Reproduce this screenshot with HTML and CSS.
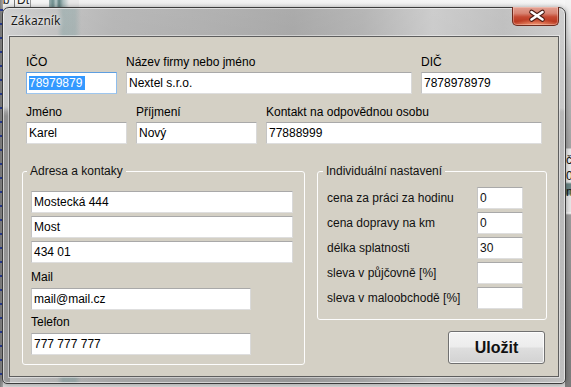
FILE: index.html
```html
<!DOCTYPE html>
<html lang="cs">
<head>
<meta charset="utf-8">
<title>Zákazník</title>
<link rel="stylesheet" href="styles.css">
</head>
<body>
<div class="bg-top"><span class="bg-t1">ab</span><span class="bg-t2">Dt</span><span class="bg-t3"></span></div>
<div class="bg-left"></div>
<div class="bg-right"><span>č</span><span>0</span><span>n</span></div>

<div class="window">
  <div class="titlebar">
    <span class="title">Zákazník</span>
    <div class="close">
      <svg width="47" height="19" viewBox="0 0 47 19">
        <path d="M19.5 6 L30.5 13.5 M30.5 6 L19.5 13.5" stroke="#4a1c14" stroke-width="4.6" stroke-linecap="round" fill="none"/>
        <path d="M19.5 6 L30.5 13.5 M30.5 6 L19.5 13.5" stroke="#ffffff" stroke-width="2.6" stroke-linecap="round" fill="none"/>
      </svg>
    </div>
  </div>
  <div class="client">
    <div class="top">
      <div class="row">
        <div class="field w-ico"><div class="lbl">IČO</div><div class="tb focus"><span class="sel">78979879</span></div></div>
        <div class="field w-name"><div class="lbl">Název firmy nebo jméno</div><div class="tb">Nextel s.r.o.</div></div>
        <div class="field w-dic"><div class="lbl">DIČ</div><div class="tb">7878978979</div></div>
      </div>
      <div class="row row2">
        <div class="field w-jm"><div class="lbl">Jméno</div><div class="tb">Karel</div></div>
        <div class="field w-pr"><div class="lbl">Příjmení</div><div class="tb">Nový</div></div>
        <div class="field w-ko"><div class="lbl">Kontakt na odpovědnou osobu</div><div class="tb">77888999</div></div>
      </div>
    </div>
    <div class="groups">
      <fieldset class="gb gb-addr">
        <legend>Adresa a kontaky</legend>
        <div class="tb addr">Mostecká 444</div>
        <div class="tb addr">Most</div>
        <div class="tb addr">434 01</div>
        <div class="lbl lbl-mail">Mail</div>
        <div class="tb contact">mail@mail.cz</div>
        <div class="lbl lbl-tel">Telefon</div>
        <div class="tb contact">777 777 777</div>
      </fieldset>
      <div class="rcol">
        <fieldset class="gb gb-ind">
          <legend>Individuální nastavení</legend>
          <div class="opt"><span>cena za práci za hodinu</span><div class="tb sm">0</div></div>
          <div class="opt"><span>cena dopravy na km</span><div class="tb sm">0</div></div>
          <div class="opt"><span>délka splatnosti</span><div class="tb sm">30</div></div>
          <div class="opt"><span>sleva v půjčovně [%]</span><div class="tb sm"></div></div>
          <div class="opt"><span>sleva v maloobchodě [%]</span><div class="tb sm"></div></div>
        </fieldset>
        <button class="save">Uložit</button>
      </div>
    </div>
  </div>
</div>
</body>
</html>
```

FILE: styles.css
```css
* { box-sizing: border-box; }

body {
  margin: 0;
  width: 571px;
  height: 387px;
  overflow: hidden;
  position: relative;
  background: #d8d8d8;
  font-family: "Liberation Sans", Arial, sans-serif;
  font-size: 12px;
  color: #000;
}

/* ---- desktop behind the dialog ---- */
.bg-top {
  position: absolute;
  left: 0;
  top: 0;
  width: 571px;
  height: 12px;
  background: linear-gradient(90deg, #f4f4f4 0, #f4f4f4 52px, #dcdcdc 53px, #f0f0f0 60px, #f6f6f6 100%);
  display: flex;
  overflow: hidden;
}
.bg-t1, .bg-t2 {
  font: 12px/12px "Liberation Sans", sans-serif;
  margin-top: -6px;
  color: #222;
}
.bg-t1 { width: 19px; border-right: 1px solid #777; margin-left: -4px; }
.bg-t2 { width: 16px; padding-left: 2px; border-right: 1px solid #999; }
.bg-t3 {
  width: 30px;
  margin-left: 18px;
  background: linear-gradient(90deg, #9fb3b3 0, #6f8f8f 4px, #b9caca 7px, #5f8080 10px, #a9bcbc 14px, #e8e8e8 20px);
}

.bg-left {
  position: absolute;
  left: 0;
  top: 0;
  width: 3px;
  height: 387px;
  background:
    repeating-linear-gradient(180deg, transparent 0 9px, #2b3f9a 9px 11px, transparent 11px 14px),
    linear-gradient(90deg, #7d7d7d, #a8a8a8);
}

.bg-right {
  position: absolute;
  right: 0;
  top: 0;
  width: 6px;
  height: 387px;
  display: flex;
  flex-direction: column;
  padding-top: 152px;
  font: 12px/16px "Liberation Sans", sans-serif;
  color: #111;
  overflow: hidden;
  background: linear-gradient(180deg, #f4f4f4 0, #e2e2e2 30px, #bdbdbd 70px, #a3a3a3 148px,
    #e9e9e9 149px, #e9e9e9 182px, #6a8585 184px, #6a8585 194px, #e6e6e6 196px, #e6e6e6 212px,
    #ffffff 213px, #9c9c9c 215px, #8a8a8a 300px, #7c7c7c 387px);
}
.bg-right span { padding-left: 1px; }

/* ---- dialog window ---- */
.window {
  position: absolute;
  left: 2px;
  top: 7px;
  width: 564px;
  height: 377px;
  border: 1px solid #3c3c3c;
  border-radius: 7px 7px 5px 5px;
  box-shadow: inset 0 0 0 1px rgba(255,255,255,0.55), 0 0 5px rgba(0,0,0,0.35);
  background:
    linear-gradient(180deg, transparent 0, transparent 98px, rgba(50,50,50,0.32) 108px, rgba(50,50,50,0.28) 100%) left top / 7px 100% no-repeat,
    linear-gradient(180deg, rgba(255,255,255,0.18) 0, rgba(255,255,255,0.08) 100px, rgba(0,0,0,0.06) 104px, rgba(0,0,0,0.02) 377px),
    linear-gradient(90deg, transparent 54px, rgba(90,135,135,0.35) 60px, rgba(90,135,135,0.3) 72px, transparent 78px),
    linear-gradient(90deg, #c6c6c6 0, #bababa 40px, #a9a9a9 110px, #a2a2a2 200px, #999999 290px, #a6a6a6 360px, #c2c2c2 430px, #b4b4b4 500px, #c4c4c4 564px);
  display: flex;
  flex-direction: column;
}

.titlebar {
  height: 28px;
  display: flex;
  align-items: flex-start;
  justify-content: space-between;
}
.title {
  font: 12px/16px "Noto Sans", "Open Sans", sans-serif;
  color: #1a1a1a;
  padding: 5px 0 0 8px;
  text-shadow: 0 0 6px rgba(255,255,255,0.9), 0 0 2px rgba(255,255,255,0.8);
}
.close {
  width: 47px;
  height: 19px;
  margin: -1px 6px 0 0;
  border: 1px solid #6e2a1d;
  border-top: none;
  border-radius: 0 0 5px 5px;
  background:
    radial-gradient(ellipse 22px 6px at 50% 100%, rgba(255,170,130,0.8), transparent),
    linear-gradient(180deg, #e3a193 0, #d88472 35%, #c54a33 55%, #bb3a22 80%, #c9553b 100%);
  box-shadow: inset 0 0 0 1px rgba(255,230,220,0.35);
}
.close svg { display: block; margin-top: -1px; margin-left: -1px; }

.client {
  flex: 1;
  margin: 0 6px 6px 6px;
  border: 1px solid #5e5e5e;
  box-shadow: 0 0 0 1px rgba(255,255,255,0.45);
  background: #d4d0c5;
}

/* ---- upper fields ---- */
.top { padding: 17px 0 0 16px; }
.row { display: flex; gap: 9px; }
.row2 { margin-top: 10px; }
.field { display: flex; flex-direction: column; }
.lbl {
  font-size: 12px;
  line-height: 16px;
  margin-bottom: 2px;
  white-space: nowrap;
}
.w-ico { width: 91px; }
.w-name { width: 286px; }
.w-dic { width: 121px; }
.w-jm { width: 101px; }
.w-pr { width: 121px; }
.w-ko { width: 276px; }

.tb {
  height: 22px;
  background: #fff;
  border: 1px solid;
  border-color: #a9a9a9 #d9d9d9 #dedede #c4c4c4;
  padding: 0 2px;
  font-size: 12px;
  line-height: 20px;
  white-space: nowrap;
  overflow: hidden;
}
.tb.focus { border-color: #5d9ee0 #8fbdec #9ec6ee #7aaee6; }
.sel {
  background: #3399ff;
  color: #fff;
  padding-right: 3px;
}

/* ---- group boxes ---- */
.groups {
  display: flex;
  gap: 12px;
  align-items: flex-start;
  margin-top: 20px;
  padding-left: 12px;
}
.gb {
  margin: 0;
  border: 1px solid #fdfdfd;
  border-radius: 3px;
  min-width: 0;
}
.gb legend {
  font-size: 12px;
  line-height: 14px;
  padding: 0 3px;
  margin-left: -4px;
  color: #111;
}
.gb-addr {
  width: 283px;
  padding: 13px 11px 9px 8px;
}
.tb.addr { margin-bottom: 3px; }
.tb.contact { width: 220px; }
.lbl-mail { margin-top: 6px; margin-bottom: 3px; }
.lbl-tel { margin-top: 4px; margin-bottom: 3px; }

.rcol {
  display: flex;
  flex-direction: column;
  width: 230px;
}
.gb-ind {
  width: 230px;
  padding: 9px 23px 10px 9px;
}
.opt {
  display: flex;
  align-items: center;
  justify-content: space-between;
  height: 22px;
  margin-bottom: 3px;
  line-height: 16px;
  color: #111;
}
.opt:last-child { margin-bottom: 0; }
.tb.sm { width: 46px; }

.save {
  align-self: flex-end;
  margin: 11px 2px 0 0;
  width: 97px;
  height: 33px;
  border: 1px solid #707070;
  border-radius: 3px;
  background: linear-gradient(180deg, #f4f4f4 0, #ececec 48%, #dedede 52%, #d2d2d2 100%);
  box-shadow: inset 0 0 0 1px rgba(255,255,255,0.8);
  font-family: "Liberation Sans", Arial, sans-serif;
  font-weight: bold;
  font-size: 16px;
  color: #111;
  padding: 0;
}
```
